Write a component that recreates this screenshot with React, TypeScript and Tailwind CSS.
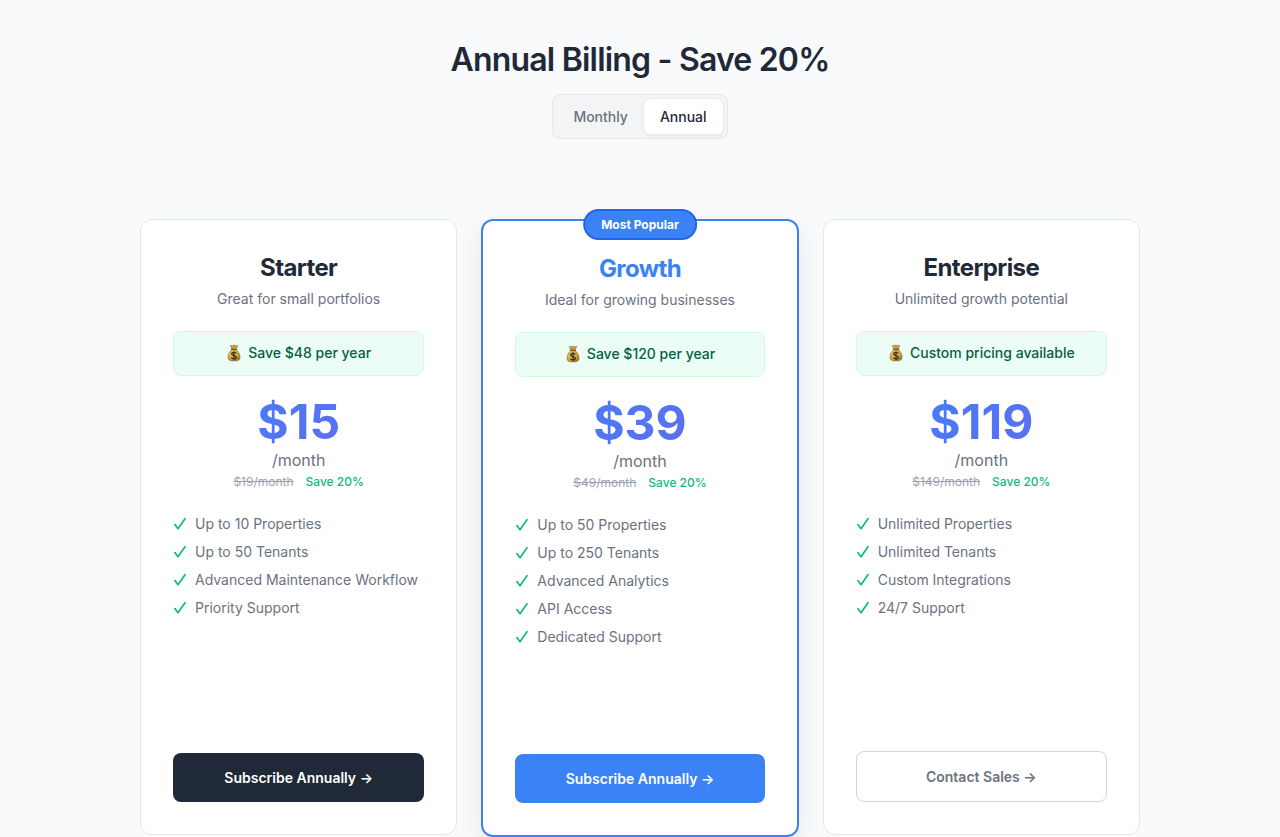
import { useState } from "react";
import clsx from "clsx";

type Plan = {
  name: string;
  tagline: string;
  saving: string;
  price: string;
  original: string;
  features: string[];
  cta: string;
  variant: "dark" | "popular" | "outline";
};

const plans: Plan[] = [
  {
    name: "Starter",
    tagline: "Great for small portfolios",
    saving: "Save $48 per year",
    price: "$15",
    original: "$19/month",
    features: ["Up to 10 Properties", "Up to 50 Tenants", "Advanced Maintenance Workflow", "Priority Support"],
    cta: "Subscribe Annually →",
    variant: "dark",
  },
  {
    name: "Growth",
    tagline: "Ideal for growing businesses",
    saving: "Save $120 per year",
    price: "$39",
    original: "$49/month",
    features: ["Up to 50 Properties", "Up to 250 Tenants", "Advanced Analytics", "API Access", "Dedicated Support"],
    cta: "Subscribe Annually →",
    variant: "popular",
  },
  {
    name: "Enterprise",
    tagline: "Unlimited growth potential",
    saving: "Custom pricing available",
    price: "$119",
    original: "$149/month",
    features: ["Unlimited Properties", "Unlimited Tenants", "Custom Integrations", "24/7 Support"],
    cta: "Contact Sales →",
    variant: "outline",
  },
];

function MoneyBag() {
  return (
    <svg viewBox="0 0 16 18" className="h-[18px] w-4 shrink-0" aria-hidden="true">
      <defs>
        <radialGradient id="bag" cx="0.38" cy="0.4" r="0.7">
          <stop offset="0" stopColor="#f0cf6a" />
          <stop offset="0.6" stopColor="#d2a53c" />
          <stop offset="1" stopColor="#8c6a2c" />
        </radialGradient>
      </defs>
      <path d="M4.200 1.400 6.100 1.800 8 .9l1.900.9 1.900-.4-1.700 4.100H5.900Z" fill="#c79a3c" stroke="#94702d" strokeWidth=".5" />
      <path d="M5.900 5.500h4.200c2.300 1.800 4 4.700 4 7.600 0 2.800-1.500 4-6.100 4s-6.100-1.200-6.100-4c0-2.900 1.700-5.800 4-7.600Z" fill="url(#bag)" stroke="#94702d" strokeWidth=".5" />
      <path d="M5.500 5.300h5" stroke="#785522" strokeWidth="1.200" strokeLinecap="round" />
      <path d="M10.300 9.500C9.900 8.700 9.100 8.300 8 8.300c-1.400 0-2.300.6-2.300 1.600 0 2.300 4.700 1 4.700 3.300 0 1-1 1.700-2.400 1.700-1.300 0-2.200-.5-2.600-1.400M8 7.200v8.800" fill="none" stroke="#3f3524" strokeWidth="1.300" />
    </svg>
  );
}

function Check() {
  return (
    <svg viewBox="0 0 14 14" className="size-[14px] shrink-0" aria-hidden="true">
      <path d="M1.900 7.600 5 11.700 12 1.700" fill="none" stroke="#10b981" strokeWidth="1.700" strokeLinecap="round" strokeLinejoin="round" />
    </svg>
  );
}

function PlanCard({ plan }: { plan: Plan }) {
  const popular = plan.variant === "popular";
  return (
    <article
      className={clsx(
        "relative rounded-xl bg-white p-8",
        popular
          ? "border-2 border-[#3b82f6] shadow-[0_8px_25px_rgba(0,0,0,0.08)]"
          : "border border-[#e5e7eb]"
      )}
    >
      {popular && (
        <span className="absolute -top-3 left-1/2 -translate-x-1/2 whitespace-nowrap rounded-full border-2 border-[#2563eb] bg-[#3b82f6] px-4 py-1.5 text-xs leading-[15px] font-bold text-white">
          Most Popular
        </span>
      )}
      <div className="flex min-h-[550px] flex-col text-center">
        <h2 className={clsx("text-2xl leading-8 font-bold tracking-tight", popular ? "text-[#3b82f6]" : "text-[#1f2937]")}>
          {plan.name}
        </h2>
        <p className="mt-1 text-sm leading-[22px] text-[#6b7280]">{plan.tagline}</p>
        <p className="mt-[21px] flex items-center justify-center gap-1.5 rounded-lg border border-[#d1fae5] bg-[#ecfdf5] pt-[11px] pb-[13px] text-sm leading-[19px] font-medium text-[#065f46]">
          <MoneyBag />
          {plan.saving}
        </p>
        <p className="mt-[22px] bg-linear-135 from-[#3b82f6] to-[#6366f1] bg-clip-text text-5xl leading-[48px] font-bold text-transparent">
          {plan.price}
        </p>
        <p className="mt-0.5 text-base leading-6 text-[#6b7280]">/month</p>
        <p className="flex justify-center gap-3 text-xs leading-5">
          <s className="text-[#9ca3af]">{plan.original}</s>
          <span className="font-medium text-[#10b981]">Save 20%</span>
        </p>
        <ul className="mt-[22px] flex grow flex-col gap-2 pb-6 text-left text-sm leading-5 text-[#6b7280]">
          {plan.features.map((feature) => (
            <li key={feature} className="flex items-center gap-2">
              <Check />
              {feature}
            </li>
          ))}
        </ul>
        <button
          type="button"
          className={clsx(
            "w-full rounded-lg py-4 text-sm leading-[17px] font-semibold",
            plan.variant === "dark" && "bg-[#1f2937] text-white",
            popular && "bg-[#3b82f6] text-white",
            plan.variant === "outline" && "border border-[#d1d5db] bg-white text-[#6b7280]"
          )}
        >
          {plan.cta}
        </button>
      </div>
    </article>
  );
}

export default function App() {
  const [period, setPeriod] = useState("Annual");
  return (
    <main className="min-h-screen bg-[#f9fafc] px-6 pt-10 font-[Inter,sans-serif]">
      <header className="flex flex-col items-center">
        <h1 className="text-center text-[32px] leading-10 font-semibold tracking-tight text-[#1f2937]">
          Annual Billing - Save 20%
        </h1>
        <div className="mt-[14px] flex rounded-lg border border-[#e5e7eb] bg-[#f3f4f6] p-1">
          {["Monthly", "Annual"].map((item) => (
            <button
              key={item}
              type="button"
              aria-pressed={period === item}
              onClick={() => setPeriod(item)}
              className={clsx(
                "rounded-md px-4 py-[9px] text-sm leading-[17px] font-medium",
                period === item
                  ? "bg-white text-[#1f2937] shadow-[0_0_0_1px_#e9ebee,0_1px_3px_rgba(0,0,0,0.1)]"
                  : "text-[#6b7280]"
              )}
            >
              {item}
            </button>
          ))}
        </div>
      </header>
      <section className="mx-auto mt-20 grid max-w-[1000px] grid-cols-1 items-start gap-6 md:grid-cols-3">
        {plans.map((plan) => (
          <PlanCard key={plan.name} plan={plan} />
        ))}
      </section>
    </main>
  );
}
